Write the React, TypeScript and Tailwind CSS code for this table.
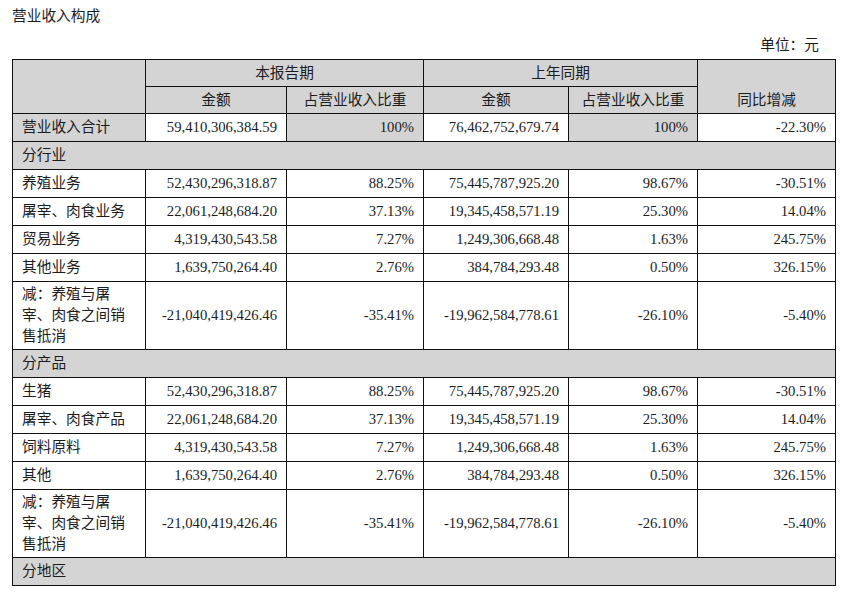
type Row =
  | { kind: 'section'; label: string }
  | { kind: 'data'; label: string; cells: string[]; tall?: boolean; total?: boolean }

const rows: Row[] = [
  { kind: 'data', label: '营业收入合计', cells: ['59,410,306,384.59', '100%', '76,462,752,679.74', '100%', '-22.30%'], total: true },
  { kind: 'section', label: '分行业' },
  { kind: 'data', label: '养殖业务', cells: ['52,430,296,318.87', '88.25%', '75,445,787,925.20', '98.67%', '-30.51%'] },
  { kind: 'data', label: '屠宰、肉食业务', cells: ['22,061,248,684.20', '37.13%', '19,345,458,571.19', '25.30%', '14.04%'] },
  { kind: 'data', label: '贸易业务', cells: ['4,319,430,543.58', '7.27%', '1,249,306,668.48', '1.63%', '245.75%'] },
  { kind: 'data', label: '其他业务', cells: ['1,639,750,264.40', '2.76%', '384,784,293.48', '0.50%', '326.15%'] },
  { kind: 'data', label: '减：养殖与屠宰、肉食之间销售抵消', cells: ['-21,040,419,426.46', '-35.41%', '-19,962,584,778.61', '-26.10%', '-5.40%'], tall: true },
  { kind: 'section', label: '分产品' },
  { kind: 'data', label: '生猪', cells: ['52,430,296,318.87', '88.25%', '75,445,787,925.20', '98.67%', '-30.51%'] },
  { kind: 'data', label: '屠宰、肉食产品', cells: ['22,061,248,684.20', '37.13%', '19,345,458,571.19', '25.30%', '14.04%'] },
  { kind: 'data', label: '饲料原料', cells: ['4,319,430,543.58', '7.27%', '1,249,306,668.48', '1.63%', '245.75%'] },
  { kind: 'data', label: '其他', cells: ['1,639,750,264.40', '2.76%', '384,784,293.48', '0.50%', '326.15%'] },
  { kind: 'data', label: '减：养殖与屠宰、肉食之间销售抵消', cells: ['-21,040,419,426.46', '-35.41%', '-19,962,584,778.61', '-26.10%', '-5.40%'], tall: true },
  { kind: 'section', label: '分地区' },
]

const cell = 'border border-[#111] px-[9px] p-0'

export default function App() {
  return (
    <div
      className="bg-white w-[851px] h-[596px] overflow-hidden pl-[12px] pt-[6px] text-[14.7px] text-[#1c1c1c]"
      style={{ fontFamily: '"Liberation Serif", "Noto Sans CJK SC", serif' }}
    >
      <div className="w-[823px]">
        <div className="leading-[20px]">营业收入构成</div>
        <div className="leading-[20px] mt-[9px] text-right pr-[16px]">单位：元</div>

        <table className="mt-[4px] w-[823px] table-fixed border-collapse">
          <colgroup>
            <col className="w-[133px]" />
            <col className="w-[141px]" />
            <col className="w-[137px]" />
            <col className="w-[145px]" />
            <col className="w-[129px]" />
            <col className="w-[138px]" />
          </colgroup>
          <thead>
            <tr className="h-[27px] bg-[#d4d4d4]">
              <th rowSpan={2} className={`${cell} font-normal`} />
              <th colSpan={2} className={`${cell} font-normal text-center`}>本报告期</th>
              <th colSpan={2} className={`${cell} font-normal text-center`}>上年同期</th>
              <th rowSpan={2} className={`${cell} font-normal text-center align-bottom pb-[2px]`}>同比增减</th>
            </tr>
            <tr className="h-[27px] bg-[#d4d4d4]">
              <th className={`${cell} font-normal text-center`}>金额</th>
              <th className={`${cell} font-normal text-center`}>占营业收入比重</th>
              <th className={`${cell} font-normal text-center`}>金额</th>
              <th className={`${cell} font-normal text-center`}>占营业收入比重</th>
            </tr>
          </thead>
          <tbody>
            {rows.map((r, i) =>
              r.kind === 'section' ? (
                <tr key={i} className="h-[28px] bg-[#d4d4d4]">
                  <td colSpan={6} className={`${cell} text-left`}>{r.label}</td>
                </tr>
              ) : (
                <tr key={i} className={r.tall ? 'h-[68px]' : 'h-[28px]'}>
                  <td className={`${cell} text-left leading-[21px] ${r.total ? 'bg-[#d4d4d4]' : ''}`}>{r.label}</td>
                  {r.cells.map((c, j) => (
                    <td
                      key={j}
                      className={`${cell} text-right whitespace-nowrap ${r.total && (j === 1 || j === 3) ? 'bg-[#d4d4d4]' : ''}`}
                    >
                      {c}
                    </td>
                  ))}
                </tr>
              )
            )}
          </tbody>
        </table>
      </div>
    </div>
  )
}
